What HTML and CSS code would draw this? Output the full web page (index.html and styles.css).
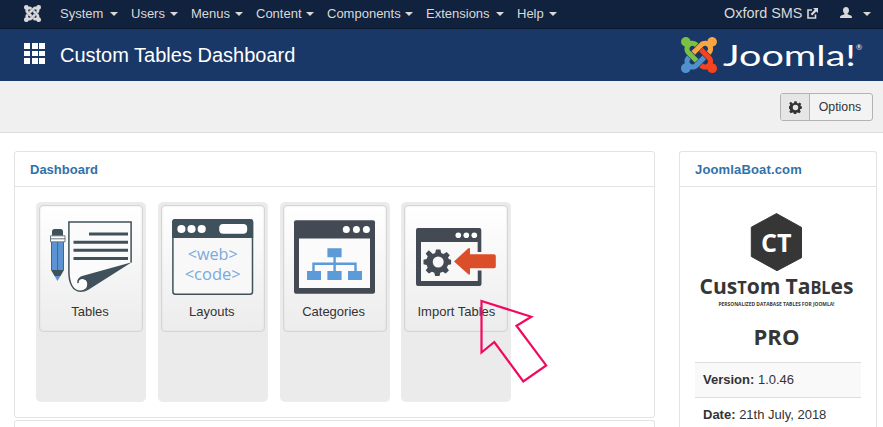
FILE: index.html
```html
<!DOCTYPE html>
<html lang="en">
<head>
<meta charset="utf-8">
<title>Custom Tables Dashboard</title>
<link rel="stylesheet" href="styles.css">
</head>
<body>
<svg class="defs" width="0" height="0">
  <defs>
    <path id="j1" d="M.6 92.1C.6 58.8 27.4 32 60.4 32c30 0 54.5 21.9 59.2 50.2 32.6-7.6 67.1.6 96.5 30l-44.3 44.3c-20.5-20.5-42.6-16.3-55.4-3.5-14.3 14.3-14.3 37.9 0 52.2l99.5 99.5-44 44.3c-87.7-87.2-49.7-49.7-99.8-99.7-26.8-26.5-35-64.8-24.8-98.9C20.4 144.6.6 120.7.6 92.1z"/>
    <path id="j2" d="M130.1 208.5l44.3 44.3c10-10 89.7-89.7 99.7-99.8 14.3-14.3 37.6-14.3 51.9 0 12.8 12.8 17 35-3.5 55.4l44 44.3c31.2-31.2 38.5-67.6 28.9-101.2 29.2-4.1 51.9-29.2 51.9-59.5 0-33.2-26.8-60.1-59.8-60.1-30.3 0-55.4 22.5-59.5 51.6-33.8-9.9-71.7-1.5-98.3 25.1-18.3 19.1-71.1 71.5-99.6 99.9z"/>
    <path id="j3" d="M396.4 360.7c8.2-32.7-.9-68.5-26.3-93.9-11.8-12.2 5 4.7-99.5-99.7l-44.3 44.3 99.7 99.7c14.3 14.3 14.3 37.6 0 51.9-12.8 12.8-35 17-55.4-3.5l-44 44.3c27.6 30.2 68 38.8 102.7 28 5.5 27.4 29.7 48.1 58.9 48.1 33 0 59.8-26.8 59.8-60.1 0-30.2-22.5-55-51.6-59.1z"/>
    <path id="j4" d="M312.1 307.6l-44-44.3c-87 86.4-50.4 50.4-99.7 99.8-14.3 14.3-37.6 14.3-51.9 0-13.1-13.4-16.9-35.3 3.2-55.4l-44-44.3c-30.2 30.2-38 65.2-29.5 98.3-26.7 6-46.2 29.9-46.2 58.2C0 453.2 26.8 480 59.8 480c28.6 0 52.5-19.8 58.6-46.7 32.7 8.2 68.5-.6 94.2-26 32.1-32 12.2-12.4 99.5-99.7z"/>
    <path id="gear" fill-rule="evenodd" d="M-2.2-12.5h4.4l.8 3.5 2.4 1 3.1-1.9 3.1 3.1L9.800-4.400l1 1.700 2.100.5v4.400l-3.100.8-1.100 2.500 2 3-3.200 3.100-3-1.800-2.400.9-.8 3.300h-4.400l-.8-3.300-2.400-.9-3 1.800-3.200-3.100 2-3-1.100-2.500-3.100-.8v-4.400l3.100-.8 1.100-2.400-2-3.200 3.100-3.100L-5.400-8l2.400-1zM0-5.500a5.500 5.500 0 1 0 0 11a5.500 5.500 0 1 0 0-11z"/>
  </defs>
</svg>

<nav class="navbar">
  <svg class="nav-logo" viewBox="0 32 448 448"><use href="#j1"/><use href="#j2"/><use href="#j3"/><use href="#j4"/></svg>
  <ul class="menu">
    <li>System<i class="caret"></i></li>
    <li>Users<i class="caret"></i></li>
    <li>Menus<i class="caret"></i></li>
    <li>Content<i class="caret"></i></li>
    <li>Components<i class="caret"></i></li>
    <li>Extensions<i class="caret"></i></li>
    <li>Help<i class="caret"></i></li>
  </ul>
  <div class="site">
    <span class="site-name">Oxford SMS</span>
    <svg class="ext" width="11" height="11" viewBox="0 0 11 11"><path d="M5 2H1v8h7.500V6.500" fill="none" stroke="#d9d9d9" stroke-width="1.600"/><path d="M6 0h5v5L9.300 3.400 5.200 7.500 3.600 5.900l4.100-4.200z" fill="#d9d9d9"/></svg>
    <svg class="user" width="12" height="11" viewBox="0 0 12 11"><path d="M6 0c1.900 0 3 1.300 3 3.200 0 1.500-.6 2.600-1.500 3.300v.8l3.300 1.300c.8.400 1.200 1 1.200 2.400H0c0-1.400.4-2 1.200-2.400l3.300-1.300v-.8C3.600 5.800 3 4.700 3 3.200 3 1.300 4.100 0 6 0z" fill="#d9d9d9"/></svg>
    <i class="caret"></i>
  </div>
</nav>

<header class="header">
  <div class="grid-icon"><i></i><i></i><i></i><i></i><i></i><i></i><i></i><i></i><i></i></div>
  <h1>Custom Tables Dashboard</h1>
  <svg class="brand" width="184" height="40" viewBox="680 36 184 40">
    <svg x="681" y="37" width="36" height="36" viewBox="0 32 448 448">
      <use href="#j1" fill="#7ac143"/><use href="#j2" fill="#f9a541"/><use href="#j3" fill="#f44321"/><use href="#j4" fill="#5091cd"/>
    </svg>
    <text class="word" x="723" y="66" textLength="133" lengthAdjust="spacingAndGlyphs">Joomla!</text>
    <text class="reg" x="856" y="50">®</text>
  </svg>
</header>

<div class="subhead">
  <div class="btn">
    <span class="btn-icon"><svg width="13" height="13" viewBox="-13 -13 26 26"><use href="#gear" fill="#333"/></svg></span>
    <span class="btn-text">Options</span>
  </div>
</div>

<main class="content">
  <div class="left">
    <section class="panel dash">
      <h2>Dashboard</h2>
      <div class="tiles">
        <div class="tile"><a class="card">
          <svg viewBox="40 206 102 94" width="102" height="94">
            <path d="M68.900 222.100h62.200v40.500L87 289c-2.500 1.800-5 2.700-8 2.500-7-1-10.100-8-10.100-18z" fill="#fbfbfb"/>
            <path d="M131.100 262.500v-40.400H68.900v50c0 11 4 19 11.500 19.200 4.500 0 7.600-3 7.600-7 0-3.600-2.500-6-5.500-6-3 0-4.700 1.800-4.500 4.800" fill="none" stroke="#3f515b" stroke-width="1.500"/>
            <path d="M131.700 262.300L83 275.700c-3.500.8-5.500 3-5.600 5.800 1.500-2 3.300-2.800 5.300-2.600 3.200.4 5.400 3 5.300 6-.1 3-2.100 5.400-5 6.800 2 0 4-.9 5.800-2.100z" fill="#3f515b"/>
            <path d="M89 234h39M73.500 242.200h54.500M73.500 250.300h54.500M73.500 258.400h54.500" stroke="#3f515b" stroke-width="3"/>
            <path d="M52 236v-4.500q0-2.500 2.500-2.500h6q2.500 0 2.500 2.500v4.500z" fill="#3f515b"/>
            <path d="M51 242h13v28h-13z" fill="#5c94d3"/>
            <path d="M51.500 242v28M63.500 242v28M57.600 242v28" stroke="#44658a" stroke-width="1"/>
            <path d="M50.500 235.800h14.500v6H50.500zM50.500 238.800h14.500" fill="#fff" stroke="#6d777d" stroke-width="1"/>
            <path d="M51 270h13l-3.500 6h-6z" fill="#3f515b"/><path d="M54.500 276h6l-3 5z" fill="#5c94d3"/>
          </svg><span>Tables</span></a></div>
        <div class="tile"><a class="card">
          <svg viewBox="161.800 206 102 94" width="102" height="94">
            <rect x="172.700" y="219.700" width="79.600" height="74.600" rx="2.500" fill="#f8f8f8" stroke="#3f515b" stroke-width="1.500"/>
            <path d="M172 238v-16q0-3 3-3h75q3 0 3 3v16z" fill="#3f515b"/>
            <g fill="#fff"><circle cx="181.200" cy="229" r="4.100"/><circle cx="191.300" cy="229" r="4.100"/><circle cx="201.500" cy="229" r="4.100"/><rect x="219" y="224" width="28" height="9.800" rx="4"/></g>
            <text class="code" x="187.500" y="260.300" textLength="50" lengthAdjust="spacingAndGlyphs">&lt;web&gt;</text>
            <text class="code" x="184.500" y="280.300" textLength="56" lengthAdjust="spacingAndGlyphs">&lt;code&gt;</text>
          </svg><span>Layouts</span></a></div>
        <div class="tile"><a class="card">
          <svg viewBox="284 206 102 94" width="102" height="94">
            <rect x="294" y="220.200" width="81" height="73.500" rx="2" fill="#434a54"/>
            <path d="M299 238.500h71v49.500h-71z" fill="#fbfbfb"/>
            <g fill="#fff"><circle cx="346.300" cy="229.600" r="3.500"/><circle cx="356.400" cy="229.600" r="3.500"/><circle cx="366.400" cy="229.600" r="3.500"/></g>
            <path d="M327.400 248.300h14.200v9h-14.200zM307 271h14v9h-14zM327.400 271h14.200v9h-14.200zM348 271h14v9h-14z" fill="#5c9ad8"/>
            <path d="M334.600 257v14M313.500 271v-7.200h42v7.200" fill="none" stroke="#5c9ad8" stroke-width="2.400"/>
          </svg><span>Categories</span></a></div>
        <div class="tile"><a class="card">
          <svg viewBox="405 206 102 94" width="102" height="94">
            <path d="M416 230q0-2 2-2h61.300q2 0 2 2v22h-4v-10H421v39h56.500v-10.500h4V284q0 2-2 2H418q-2 0-2-2z" fill="#434a54"/>
            <path d="M421 242h56.500v39H421z" fill="#f8f8f8"/>
            <g fill="#fff"><circle cx="458.300" cy="235.300" r="2.800"/><circle cx="466.300" cy="235.300" r="2.800"/><circle cx="474.300" cy="235.300" r="2.800"/></g>
            <g transform="translate(438.200 262)"><use href="#gear" fill="#434a54"/></g>
            <path d="M454 261.500l14-13q2-1.500 2 .8v4.900h24q1.800 0 1.800 1.800v10.500q0 1.800-1.800 1.800h-24v4.900q0 2.500-2 .8z" fill="#da4f2a"/>
          </svg><span>Import Tables</span></a></div>
      </div>
    </section>
    <section class="panel next"></section>
  </div>
  <aside class="panel side">
    <h2>JoomlaBoat.com</h2>
    <svg class="product" viewBox="695 202 166 160" width="166" height="160">
      <path d="M776.500 213.600l25 13.800v30.300l-24.500 13-25.700-14.200v-29.300z" fill="#363636" stroke="#363636" stroke-width="1" stroke-linejoin="round"/>
      <text class="pt ct" x="761" y="252" textLength="30.500" lengthAdjust="spacingAndGlyphs">CT</text>
      <text class="pt name" x="699.500" y="293.500" textLength="81" lengthAdjust="spacingAndGlyphs">Cus<tspan class="sc">T</tspan>om</text>
      <text class="pt name" x="785.500" y="293.500" textLength="68" lengthAdjust="spacingAndGlyphs">Ta<tspan class="sc">BL</tspan>es</text>
      <text class="pt tag" x="718.500" y="306" textLength="116" lengthAdjust="spacingAndGlyphs">PERSONALIZED DATABASE TABLES FOR JOOMLA!</text>
      <text class="pt pro" x="753.500" y="344.500" textLength="46" lengthAdjust="spacingAndGlyphs">PRO</text>
    </svg>
    <div class="row odd"><b>Version:</b> 1.0.46</div>
    <div class="row"><b>Date:</b> 21th July, 2018</div>
  </aside>
</main>

<svg class="pointer" viewBox="478 294 72 92" width="72" height="92"><path d="M481.500 301l49.800 15.700-14.800 9 29.700 39.700L523.300 381.500l-29-39.500-12.800 10.500z" fill="none" stroke="#f3085f" stroke-width="2.200"/></svg>
</body>
</html>
```
FILE: styles.css
```css
* { box-sizing: border-box; }
body { margin: 0; height: 427px; overflow: hidden; background: #fff; color: #333; font: 13px/18px "Liberation Sans", Arial, sans-serif; }
.defs, .pointer { position: absolute; }
.pointer { left: 478px; top: 294px; }

.navbar { display: flex; height: 29px; padding: 0 12px 0 24px; background: #10223e; border-bottom: 1px solid #0b182c; color: #d9d9d9; }
.nav-logo { width: 17px; height: 17px; margin: 4.500px 19px 0 0; fill: #d9d9d9; stroke: #d9d9d9; stroke-width: 12px; }
.menu { display: flex; gap: 13px; margin: 0; padding: 5px 0 0; list-style: none; }
.menu li { display: flex; justify-content: space-between; width: 58px; white-space: nowrap; }
.menu li:nth-child(2) { width: 47px; }
.menu li:nth-child(3) { width: 52px; }
.menu li:nth-child(5) { width: 86px; }
.menu li:nth-child(6) { width: 78px; }
.menu li:nth-child(7) { width: 40px; }
.caret { flex: none; width: 8px; height: 4px; margin-top: 7px; border: 4px solid transparent; border-top-color: #d9d9d9; border-bottom: 0; }
.site { display: flex; margin-left: auto; padding-top: 5px; }
.site-name { font-size: 14.400px; line-height: 17px; width: 79px; white-space: nowrap; }
.ext { margin: 3px 0 0 4px; }
.user { margin: 2px 11px 0 22px; }

.header { display: flex; height: 52px; padding: 0 19px 0 24px; background: #1a3867; color: #fff; }
.grid-icon { display: grid; grid-template-columns: repeat(3, 6px); grid-auto-rows: 5.500px; margin-top: 14px; width: 36px; column-gap: 1.700px; row-gap: 2px; }
.grid-icon i { background: #fff; }
h1 { margin: 11px 0 0; font-size: 20px; line-height: 30px; font-weight: 400; white-space: nowrap; }
.brand { margin: 7px 0 0 auto; }
.word { font: 29px Lato, sans-serif; fill: #fff; }
.reg { font: 7.500px Lato, sans-serif; fill: #fff; }

.subhead { display: flex; justify-content: flex-end; height: 52px; padding: 12px 10px 0 0; background: #f0f0f0; border-bottom: 1px solid #dcdcdc; }
.btn { display: flex; width: 93px; height: 28px; border: 1px solid #b3b3b3; border-radius: 3px; background: #f3f3f3; line-height: 27px; overflow: hidden; }
.btn-icon { display: flex; align-items: center; justify-content: center; width: 29px; background: #e6e6e6; border-right: 1px solid #b3b3b3; }
.btn-text { flex: 1; padding-right: 2px; text-align: center; font-size: 12.300px; }

.content { display: flex; gap: 24px; height: 294px; padding: 18px 6px 0 14px; overflow: hidden; }
.left { width: 641px; }
.panel { border: 1px solid #e3e3e3; border-radius: 3px; background: #fff; }
.dash { height: 267px; }
.next { height: 7px; margin-top: 2px; border-bottom: 0; border-radius: 3px 3px 0 0; }
h2 { height: 35px; margin: 0; padding: 0 15px; border-bottom: 1px solid #e3e3e3; color: #3071a9; font-size: 13px; line-height: 35px; }
.side h2 { letter-spacing: .15px; margin-bottom: 15px; }
.tiles { display: flex; gap: 11.800px; padding: 15px 0 0 21px; }
.tile { width: 110px; height: 200px; padding: 3px; background: #ebebeb; border-radius: 5px; }
.card { display: block; height: 127px; border: 1px solid #d5d5d5; border-radius: 4px; background: linear-gradient(#fff, #ececec); box-shadow: inset 0 0 2px #ddd; text-align: center; }
.card svg { display: block; }
.card span { display: block; padding-right: 2px; line-height: 23px; }
.tile:last-child span { padding-right: 0; }
.code { font: 400 17px "Open Sans", sans-serif; fill: #7ba9dd; }

.side { width: 198px; height: 276px; border-bottom: 0; border-radius: 3px 3px 0 0; }
.product { display: block; margin-left: 15px; }
.pt { font-family: "Open Sans", sans-serif; font-weight: 700; fill: #363636; }
.ct { font-size: 25px; fill: #fff; }
.name { font-size: 22px; }
.sc { font-size: 17px; }
.tag { font-size: 5px; }
.pro { font-size: 21.500px; }
.row { height: 35px; margin: 0 15px; padding: 8px 8px 0; border-top: 1px solid #ddd; white-space: nowrap; }
.row:last-child { height: 30px; }
.odd { background: #f9f9f9; }
```
